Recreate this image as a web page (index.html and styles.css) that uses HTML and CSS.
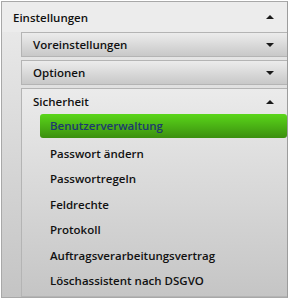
FILE: index.html
```html
<!DOCTYPE html>
<html lang="de">
<head>
  <meta charset="UTF-8">
  <title>Einstellungen</title>
  <link rel="stylesheet" href="styles.css">
</head>
<body>
  <div class="panel">
    <div class="panel-head">
      <span>Einstellungen</span>
      <span class="arrow up"></span>
    </div>
    <div class="panel-body">
      <div class="sub">
        <div class="sub-head">
          <span>Voreinstellungen</span>
          <span class="arrow down"></span>
        </div>
      </div>
      <div class="sub">
        <div class="sub-head">
          <span>Optionen</span>
          <span class="arrow down"></span>
        </div>
      </div>
      <div class="sub open">
        <div class="sub-head">
          <span>Sicherheit</span>
          <span class="arrow up"></span>
        </div>
        <ul class="menu">
          <li class="active">Benutzerverwaltung</li>
          <li>Passwort ändern</li>
          <li>Passwortregeln</li>
          <li>Feldrechte</li>
          <li>Protokoll</li>
          <li>Auftragsverarbeitungsvertrag</li>
          <li>Löschassistent nach DSGVO</li>
        </ul>
      </div>
    </div>
  </div>
</body>
</html>
```

FILE: styles.css
```css
body {
  margin: 0;
  background: #ffffff;
  font-family: "Open Sans", "Liberation Sans", sans-serif;
  font-size: 11.5px;
  font-weight: 600;
  color: #111;
}

/* aeusserer Rahmen */
.panel {
  width: 287px;
  height: 297px;
  margin: 1px 0 0 1px;
  border: 1px solid #a8a8a8;
  border-right-color: #9c9c9c;
  box-sizing: border-box;
  background: linear-gradient(#ececec, #c4c4c4);
  display: flex;
  flex-direction: column;
}

.panel-head {
  height: 30px;
  display: flex;
  align-items: center;
  justify-content: space-between;
  padding: 0 13px 0 11px;
  background: #ececec;
  flex: none;
}

.panel-body {
  padding: 0 0 0 19px;
  display: flex;
  flex-direction: column;
  gap: 3px;
  flex: 1;
}

.sub {
  border: 1px solid #b4b4b4;
  border-right: none;
  background: linear-gradient(#ececec, #c8c8c8);
}

.sub-head {
  height: 23px;
  display: flex;
  align-items: center;
  justify-content: space-between;
  padding: 0 13px 0 11px;
}

.sub.open {
  flex: 1;
  background: linear-gradient(#ebebeb, #c5c5c5);
}

.sub.open .sub-head {
  height: 25px;
}

/* Pfeile */
.arrow {
  width: 0;
  height: 0;
  border-left: 4px solid transparent;
  border-right: 4px solid transparent;
}
.arrow.up {
  border-bottom: 4px solid #1a1a1a;
}
.arrow.down {
  border-top: 4px solid #1a1a1a;
}

.menu {
  list-style: none;
  margin: 0;
  padding: 0 0 0 18px;
}

.menu li {
  height: 25.6px;
  line-height: 25.6px;
  padding-left: 10px;
}

.menu li.active {
  height: 24px;
  line-height: 24px;
  margin-bottom: 2.5px;
  border-radius: 3px;
  color: #1d3a6e;
  background: linear-gradient(#5ad61a, #3b8f0f);
}
```
